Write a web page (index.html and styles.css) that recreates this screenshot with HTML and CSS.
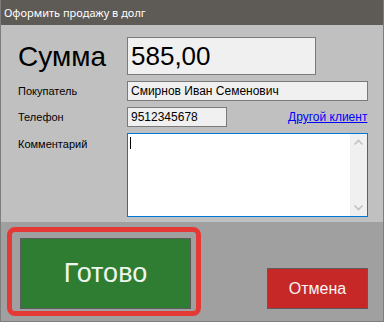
FILE: index.html
```html
<!DOCTYPE html>
<html lang="ru">
<head>
<meta charset="utf-8">
<title>Оформить продажу в долг</title>
<link rel="stylesheet" href="styles.css">
</head>
<body>
<div class="window">
  <div class="titlebar">Оформить продажу в долг</div>
  <div class="content">
    <div class="row row-sum">
      <div class="label label-big">Сумма</div>
      <div class="field field-sum">585,00</div>
    </div>
    <div class="row row-buyer">
      <div class="label">Покупатель</div>
      <div class="field field-buyer">Смирнов Иван Семенович</div>
    </div>
    <div class="row row-phone">
      <div class="label">Телефон</div>
      <div class="field field-phone">9512345678</div>
      <a class="link" href="#">Другой клиент</a>
    </div>
    <div class="row row-comment">
      <div class="label label-top">Комментарий</div>
      <div class="memo">
        <div class="memo-text"><span class="caret"></span></div>
        <div class="scrollbar">
          <svg class="arrow" width="17" height="17" viewBox="0 0 17 17"><path d="M4.5 10.5 L8.5 6.5 L12.5 10.5" fill="none" stroke="#c2c2c2" stroke-width="1.6"/></svg>
          <svg class="arrow" width="17" height="17" viewBox="0 0 17 17"><path d="M4.5 6.5 L8.5 10.5 L12.5 6.5" fill="none" stroke="#c2c2c2" stroke-width="1.6"/></svg>
        </div>
      </div>
    </div>
  </div>
  <div class="footer">
    <div class="ok-wrap">
      <button class="btn btn-ok">Готово</button>
      <div class="highlight"></div>
    </div>
    <button class="btn btn-cancel">Отмена</button>
  </div>
</div>
</body>
</html>
```

FILE: styles.css
```css
html, body {
  margin: 0;
  padding: 0;
  background: #a0a0a0;
}
.window {
  width: 384px;
  height: 322px;
  box-sizing: border-box;
  border: 1px solid #7d7d7d;
  border-top: none;
  display: flex;
  flex-direction: column;
  font-family: "Liberation Sans", Arial, sans-serif;
  overflow: hidden;
}
.titlebar {
  height: 25px;
  margin: 0 -1px;
  background: #5e5a56;
  color: #ffffff;
  font-family: "Noto Sans", "Open Sans", sans-serif;
  font-size: 11px;
  line-height: 25px;
  padding-left: 4px;
  flex: none;
}
.content {
  background: #c0c0c0;
  height: 197px;
  box-sizing: border-box;
  padding: 12px 0 0 17px;
  flex: none;
}
.row {
  display: flex;
  align-items: center;
}
.row-sum { height: 38px; }
.row-buyer { height: 20px; margin-top: 6px; }
.row-phone { height: 20px; margin-top: 6px; }
.row-comment { height: 84px; margin-top: 6px; align-items: flex-start; }
.label {
  width: 109px;
  flex: none;
  font-size: 11px;
  color: #000;
}
.label-big {
  font-size: 28px;
  padding-top: 1px;
}
.label-top { padding-top: 5px; }
.field {
  box-sizing: border-box;
  height: 100%;
  border: 1px solid #7a7a7a;
  background: #f0f0f0;
  color: #000;
  display: flex;
  align-items: center;
  padding-left: 3px;
  font-size: 12px;
}
.field-sum {
  width: 189px;
  font-size: 26px;
  padding-left: 3px;
  padding-top: 1px;
}
.field-buyer { width: 241px; }
.field-phone { width: 100px; }
.link {
  margin-left: 61px;
  color: #0000ff;
  text-decoration: underline;
  font-size: 12px;
}
.memo {
  box-sizing: border-box;
  width: 241px;
  height: 84px;
  border: 1px solid #0078d7;
  background: #ffffff;
  display: flex;
}
.memo-text {
  flex: 1;
  padding: 3px 0 0 2px;
}
.caret {
  display: block;
  width: 1px;
  height: 12px;
  background: #000;
}
.scrollbar {
  width: 17px;
  background: #f0f0f0;
  display: flex;
  flex-direction: column;
  justify-content: space-between;
}
.arrow { display: block; }
.footer {
  flex: 1;
  background: #a0a0a0;
  display: flex;
  align-items: flex-end;
  justify-content: space-between;
  padding: 0 15px 12px 19px;
}
.ok-wrap {
  position: relative;
  width: 171px;
  height: 71px;
}
.btn {
  box-sizing: border-box;
  border: 1px solid #5c5c5c;
  font-family: "Liberation Sans", Arial, sans-serif;
  padding: 0;
  margin: 0;
}
.btn-ok {
  width: 171px;
  height: 71px;
  background: #2e7d32;
  color: #eef5ee;
  font-size: 27px;
}
.highlight {
  position: absolute;
  left: -13px;
  top: -11px;
  width: 194px;
  height: 89px;
  box-sizing: border-box;
  border: 5px solid #e53935;
  border-radius: 8px;
}
.btn-cancel {
  width: 101px;
  height: 41px;
  background: #c62828;
  color: #f5f5f5;
  font-size: 16px;
}
```
